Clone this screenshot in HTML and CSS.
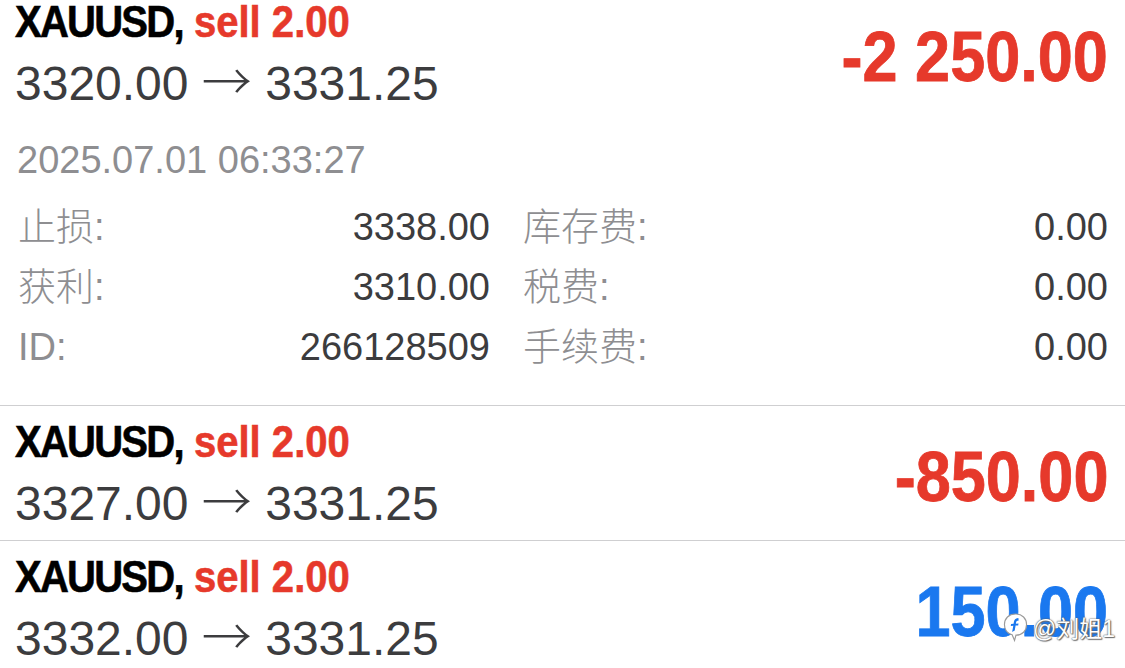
FILE: index.html
```html
<!DOCTYPE html>
<html lang="zh">
<head>
<meta charset="utf-8">
<title>History</title>
<link rel="stylesheet" href="styles.css">
</head>
<body>
<div class="list">
  <div class="trade first">
    <div class="head">
      <div class="info">
        <div class="title"><span class="sym">XAUUSD,</span> <span class="side">sell 2.00</span></div>
        <div class="price">3320.00 <span class="arrow">→</span> 3331.25</div>
      </div>
      <div class="pl loss">-2 250.00</div>
    </div>
    <div class="time">2025.07.01 06:33:27</div>
    <div class="details">
      <div class="kv"><span class="k">止损:</span><span class="v">3338.00</span></div>
      <div class="kv"><span class="k">库存费:</span><span class="v">0.00</span></div>
      <div class="kv"><span class="k">获利:</span><span class="v">3310.00</span></div>
      <div class="kv"><span class="k">税费:</span><span class="v">0.00</span></div>
      <div class="kv"><span class="k">ID:</span><span class="v">266128509</span></div>
      <div class="kv"><span class="k">手续费:</span><span class="v">0.00</span></div>
    </div>
  </div>
  <div class="trade">
    <div class="head">
      <div class="info">
        <div class="title"><span class="sym">XAUUSD,</span> <span class="side">sell 2.00</span></div>
        <div class="price">3327.00 <span class="arrow">→</span> 3331.25</div>
      </div>
      <div class="pl loss">-850.00</div>
    </div>
  </div>
  <div class="trade">
    <div class="head">
      <div class="info">
        <div class="title"><span class="sym">XAUUSD,</span> <span class="side">sell 2.00</span></div>
        <div class="price">3332.00 <span class="arrow">→</span> 3331.25</div>
      </div>
      <div class="pl gain">150.00</div>
    </div>
  </div>
</div>
<div class="watermark">
  <svg class="wm-icon" width="25" height="31" viewBox="0 0 26 32" aria-hidden="true">
    <path d="M13 2 C20 2 24.5 6.5 24.5 13 C24.5 19.5 20 24 13.5 24 L12 29.5 L9.5 23.6 C4.8 22.3 1.5 18.2 1.5 13 C1.5 6.5 6 2 13 2 Z" fill="#ffffff" stroke="#9a9a9a" stroke-width="1.2"/>
    <path d="M16 6 C13 6.1 11.7 7.9 11.3 10.4 L11 12.2 L8.4 12.4 L8.1 14.4 L10.7 14.2 L9.5 20.8 L12.2 19 L13.1 14 L15.8 13.8 L16.1 11.9 L13.4 12.1 L13.6 10.9 C13.8 9.4 14.6 8.7 16.3 8.7 Z" fill="#1a78ef"/>
  </svg>
  <span class="wm-text">@刘姐1</span>
</div>
</body>
</html>
```

FILE: styles.css
```css
* { box-sizing: border-box; }

html, body {
  margin: 0;
  padding: 0;
  background: #ffffff;
}

body {
  width: 1125px;
  height: 668px;
  overflow: hidden;
  position: relative;
  font-family: "Liberation Sans", Arial, "Noto Sans CJK SC", sans-serif;
}

.trade {
  padding: 14px 0 6px 15px;
  border-bottom: 1px solid #cfcfd1;
}

.trade.first {
  padding-top: 0;
  padding-bottom: 28px;
}

.trade:last-child {
  border-bottom: none;
}

.head {
  display: flex;
  justify-content: space-between;
  align-items: center;
  padding-right: 17px;
}

.title {
  font-family: "Liberation Sans", Arial, sans-serif;
  font-weight: bold;
  font-size: 45px;
  line-height: 44px;
  height: 44px;
  white-space: nowrap;
  transform: scaleX(0.89);
  transform-origin: left center;
  -webkit-text-stroke: 0.6px currentColor;
}

.sym {
  color: #000000;
  letter-spacing: -2px;
}

.side { color: #e6392b; }

.price {
  margin-top: 10px;
  font-size: 48px;
  line-height: 60px;
  color: #3c3c3e;
  white-space: nowrap;
}

.arrow {
  font-family: "Noto Sans CJK SC", "DejaVu Sans", sans-serif;
  font-weight: 300;
  font-size: 50px;
  line-height: 0;
}

.pl {
  font-family: "Liberation Sans", Arial, sans-serif;
  font-weight: bold;
  font-size: 70px;
  line-height: 80px;
  white-space: nowrap;
  transform: scaleX(0.9);
  transform-origin: right center;
  -webkit-text-stroke: 0.8px currentColor;
}

.pl.loss { color: #e6392b; }
.pl.gain { color: #1a78ef; }

.time {
  margin-top: 22px;
  padding-left: 2px;
  font-size: 38px;
  line-height: 48px;
  color: #8e8e91;
}

.details {
  margin-top: 13px;
  display: grid;
  grid-template-columns: 475px 1fr;
  column-gap: 30px;
  padding-right: 17px;
}

.kv {
  display: flex;
  justify-content: space-between;
  align-items: baseline;
  height: 60px;
  line-height: 60px;
  font-size: 38px;
}

.k {
  padding-left: 3px;
  color: #8e8e91;
  font-family: "Liberation Sans", "Noto Sans CJK SC", sans-serif;
  font-weight: 300;
}

.v {
  color: #3c3c3e;
}

.watermark {
  position: absolute;
  left: 1003px;
  top: 610px;
  display: flex;
  align-items: center;
  gap: 5px;
}

.wm-text {
  font-family: "Liberation Sans", "Noto Sans CJK SC", sans-serif;
  font-size: 23px;
  color: #ffffff;
  text-shadow: 0 0 1px #555, 0 0 2px #666, 1px 1px 1px #777;
}
```
